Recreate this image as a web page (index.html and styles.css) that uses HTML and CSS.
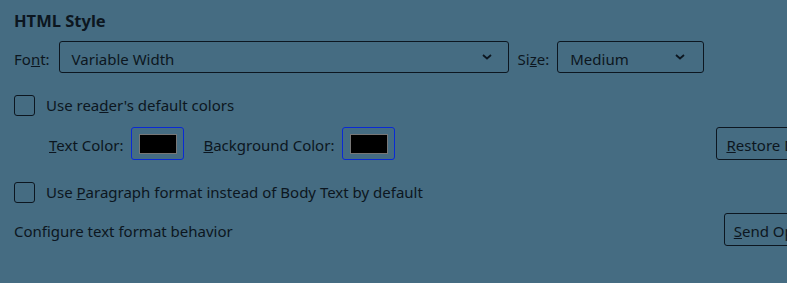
FILE: index.html
```html
<html lang="en">
<head>
    <meta name="viewport" content="width=device-width, initial-scale=1.0">
    <title>HTML Style</title>
    <link rel="stylesheet" href="styles.css">
</head>
<body>
    <div class="panel">
        <h3 class="heading">HTML Style</h3>
        <div class="row fontRow">
            <span class="label">Fo<u>n</u>t:</span>
            <div class="select fontSelect">
                <span>Variable Width</span>
                <svg class="chevron" width="10" height="6" viewBox="0 0 10 6"><path d="M1 1 L5 4.5 L9 1" fill="none" stroke="#0c1620" stroke-width="1.8"/></svg>
            </div>
            <span class="label sizeLabel">Si<u>z</u>e:</span>
            <div class="select sizeSelect">
                <span>Medium</span>
                <svg class="chevron" width="10" height="6" viewBox="0 0 10 6"><path d="M1 1 L5 4.5 L9 1" fill="none" stroke="#0c1620" stroke-width="1.8"/></svg>
            </div>
        </div>
        <div class="row checkRow">
            <span class="checkbox"></span>
            <span>Use rea<u>d</u>er's default colors</span>
        </div>
        <div class="row colorRow">
            <span class="label textLabel"><u>T</u>ext Color:</span>
            <span class="swatch"><span class="swatchFill"></span></span>
            <span class="label bgLabel"><u>B</u>ackground Color:</span>
            <span class="swatch"><span class="swatchFill"></span></span>
            <button class="btn restoreBtn"><u>R</u>estore Defaults</button>
        </div>
        <div class="row checkRow second">
            <span class="checkbox"></span>
            <span>Use <u>P</u>aragraph format instead of Body Text by default</span>
        </div>
        <div class="row configRow">
            <span>Configure text format behavior</span>
            <button class="btn sendBtn"><u>S</u>end Options</button>
        </div>
    </div>
</body>
</html>
```

FILE: styles.css
```css
body {
    font-family: "Noto Sans", "Open Sans", sans-serif;
    font-size: 15px;
    color: #0c1620;
    background-color: #456c82;
    margin: 0;
    overflow: hidden;
}
.panel {
    padding: 9px 0 0 14px;
    width: 900px;
}
.heading {
    font-size: 16.5px;
    font-weight: bold;
    margin: 0;
    height: 25px;
    line-height: 24px;
}
.row {
    display: flex;
    align-items: center;
    white-space: nowrap;
}
.row > * {
    flex-shrink: 0;
}
.fontRow {
    margin-top: 7px;
    height: 32px;
}
.fontRow .label {
    padding-top: 3px;
}
.select {
    box-sizing: border-box;
    height: 32px;
    border: 1px solid #0c1620;
    border-radius: 3px;
    display: flex;
    align-items: center;
    justify-content: space-between;
    padding: 3px 16px 0 12px;
}
.chevron {
    margin-top: -3px;
}
.fontSelect {
    width: 450px;
    margin-left: 9px;
}
.sizeLabel {
    margin-left: 9px;
}
.sizeSelect {
    width: 147px;
    margin-left: 8px;
    padding-right: 18px;
}
.checkRow {
    margin-top: 21px;
    height: 22px;
}
.checkbox {
    box-sizing: border-box;
    width: 21px;
    height: 21px;
    border: 1px solid #0c1620;
    border-radius: 3px;
    margin-right: 11px;
}
.colorRow {
    margin-top: 11px;
    height: 33px;
    padding-left: 35px;
}
.colorRow .label {
    padding-top: 2px;
}
.swatch {
    box-sizing: border-box;
    width: 53px;
    height: 33px;
    border: 1px solid #0a2ad4;
    border-radius: 3px;
    display: flex;
    align-items: center;
    justify-content: center;
    margin-left: 8px;
}
.swatchFill {
    box-sizing: border-box;
    width: 38px;
    height: 20px;
    background-color: #000;
    border: 1px solid #777;
}
.bgLabel {
    margin-left: 19px;
}
.btn {
    font-family: inherit;
    font-size: 15px;
    color: #0c1620;
    background: transparent;
    border: 1px solid #0c1620;
    border-radius: 3px;
    height: 33px;
    padding: 2px 9px 0;
    white-space: nowrap;
}
.restoreBtn {
    margin-left: 321px;
}
.checkRow.second {
    margin-top: 21px;
}
.configRow {
    margin-top: 10px;
    height: 33px;
}
.configRow > span {
    padding-top: 3px;
}
.sendBtn {
    margin-left: 491px;
}
```
